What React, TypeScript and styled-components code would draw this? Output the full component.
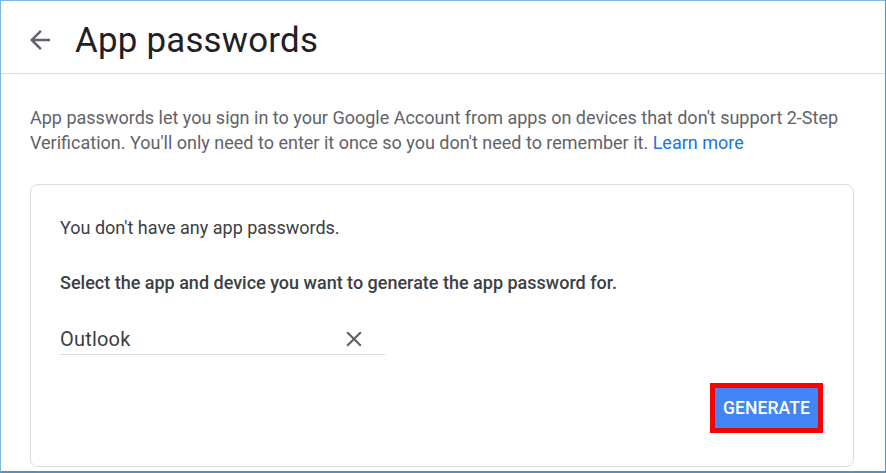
import React from "react";
import styled, { createGlobalStyle } from "styled-components";

const GlobalStyle = createGlobalStyle`
  html, body {
    margin: 0;
    padding: 0;
    background: #ffffff;
  }
  body {
    font-family: Roboto, "Liberation Sans", Arial, sans-serif;
  }
`;

const BackIcon = () => (
  <svg width="30" height="30" viewBox="0 0 24 24" fill="#5f6368">
    <path d="M20 11H7.83l5.59-5.59L12 4l-8 8 8 8 1.41-1.41L7.83 13H20v-2z" />
  </svg>
);

const CloseIcon = () => (
  <svg width="26" height="26" viewBox="0 0 24 24" fill="#5f6368">
    <path d="M19 6.41L17.59 5 12 10.59 6.41 5 5 6.41 10.59 12 5 17.59 6.41 19 12 13.41 17.59 19 19 17.59 13.41 12z" />
  </svg>
);

const App: React.FC = () => {
  return (
    <>
      <GlobalStyle />
      <Frame>
        <Header>
          <BackButton>
            <BackIcon />
          </BackButton>
          <Title>App passwords</Title>
        </Header>
        <Content>
          <Intro>
            App passwords let you sign in to your Google Account from apps on devices that don't support 2&#8209;Step
            Verification. You'll only need to enter it once so you don't need to remember it.{" "}
            <LearnMore href="#">Learn more</LearnMore>
          </Intro>
          <Card>
            <CardText>You don't have any app passwords.</CardText>
            <CardText bold>Select the app and device you want to generate the app password for.</CardText>
            <Field>
              <FieldValue>Outlook</FieldValue>
              <ClearButton>
                <CloseIcon />
              </ClearButton>
            </Field>
            <Actions>
              <Highlight>
                <GenerateButton>GENERATE</GenerateButton>
              </Highlight>
            </Actions>
          </Card>
        </Content>
      </Frame>
    </>
  );
};

export default App;

const Frame = styled.div`
  box-sizing: border-box;
  width: 886px;
  height: 473px;
  border-top: 1px solid #7cb8e6;
  border-left: 1px solid #7cb8e6;
  border-right: 1px solid #5a8fba;
  border-bottom: 2px solid #5a8fba;
  overflow: hidden;
  background: #ffffff;
`;

const Header = styled.div`
  display: flex;
  align-items: center;
  height: 73px;
  border-bottom: 1px solid #dadce0;
  padding-left: 24px;
  box-sizing: border-box;
`;

const BackButton = styled.div`
  display: flex;
  align-items: center;
  justify-content: center;
  width: 30px;
  height: 30px;
  margin-right: 20px;
  margin-top: 6px;
`;

const Title = styled.h1`
  margin: 6px 0 0;
  font-family: Roboto, "Liberation Sans", sans-serif;
  font-weight: 400;
  font-size: 34.8px;
  color: #202124;
  letter-spacing: 0.25px;
`;

const Content = styled.div`
  padding: 31px 31px 0 29px;
`;

const Intro = styled.p`
  margin: 0 0 29px;
  font-size: 18px;
  line-height: 25px;
  color: #5f6368;
`;

const LearnMore = styled.a`
  color: #1a73e8;
  text-decoration: none;
`;

const Card = styled.div`
  border: 1px solid #dadce0;
  border-radius: 8px;
  padding: 31px 30px 33px 29px;
  display: flex;
  flex-direction: column;
`;

const CardText = styled.p<{ bold?: boolean }>`
  margin: 0 0 31px;
  font-size: 18px;
  line-height: 24px;
  color: #3c4043;
  font-weight: ${(p) => (p.bold ? 500 : 400)};

  &:last-of-type {
    margin-bottom: 25px;
  }
`;

const Field = styled.div`
  display: flex;
  align-items: center;
  justify-content: space-between;
  width: 325px;
  height: 35px;
  padding-top: 3px;
  border-bottom: 1px solid #dadce0;
  box-sizing: border-box;
`;

const FieldValue = styled.span`
  font-size: 20px;
  color: #3c4043;
  letter-spacing: 0.2px;
`;

const ClearButton = styled.div`
  display: flex;
  align-items: center;
  justify-content: center;
  margin-right: 18px;
`;

const Actions = styled.div`
  display: flex;
  justify-content: flex-end;
  margin-top: 28px;
`;

const Highlight = styled.div`
  border: 5px solid #ff0000;
  display: flex;
`;

const GenerateButton = styled.button`
  border: none;
  background: #4285f4;
  color: #ffffff;
  font-family: Roboto, "Liberation Sans", sans-serif;
  font-size: 17.5px;
  font-weight: 500;
  letter-spacing: 0.1px;
  width: 103px;
  height: 40px;
  padding: 0;
  cursor: pointer;
  box-shadow: 0 1px 3px rgba(60, 64, 67, 0.3);
`;
